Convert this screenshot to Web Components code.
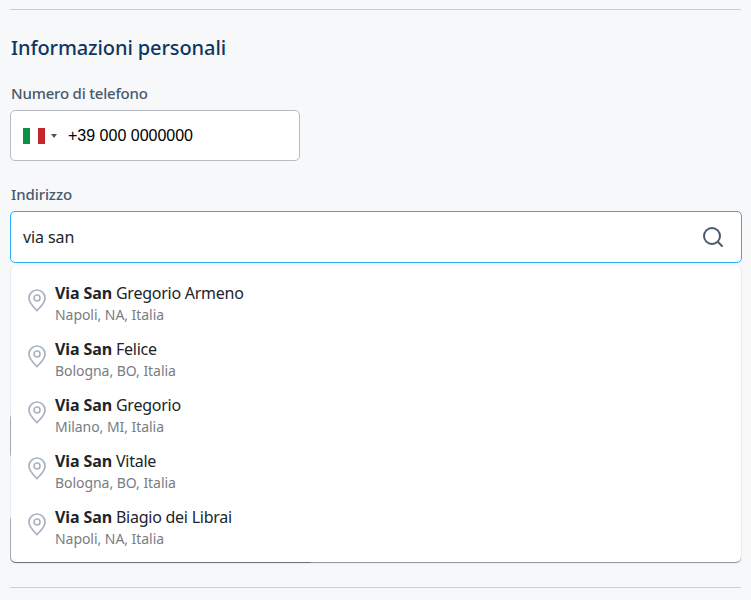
<!DOCTYPE html>
<html lang="it">
<head>
<meta charset="utf-8">
<title>Informazioni personali</title>
<style>
  html, body { margin: 0; height: 100%; background: #f6f8fa; overflow: hidden; }
  body { font-family: "Noto Sans", "Open Sans", sans-serif; }
</style>
</head>
<body>
<profile-form>
  <address-option street="Gregorio Armeno" place="Napoli, NA, Italia"></address-option>
  <address-option street="Felice" place="Bologna, BO, Italia"></address-option>
  <address-option street="Gregorio" place="Milano, MI, Italia"></address-option>
  <address-option street="Vitale" place="Bologna, BO, Italia"></address-option>
  <address-option street="Biagio dei Librai" place="Napoli, NA, Italia"></address-option>
</profile-form>

<script>
  // one row of the suggestion list
  class AddressOption extends HTMLElement {
    constructor() {
      super();
      this.attachShadow({ mode: 'open' });
    }

    connectedCallback() {
      this.shadowRoot.innerHTML = `
        <style>
          :host { display: flex; height: 56px; box-sizing: border-box; padding: 16px 0 0 16px; gap: 8px; }
          svg { width: 20px; height: 26px; margin-top: 5px; flex: none; }
          .street { font-size: 16px; line-height: 22px; color: #212529; letter-spacing: -0.25px; }
          b { font-weight: 700; letter-spacing: -0.1px; }
          .place { margin-top: 1px; font-size: 14px; line-height: 20px; color: #787d82; letter-spacing: -0.05px; }
        </style>
        <svg viewBox="0 0 20 26" fill="none" stroke="#a9b3c0" stroke-width="1.7">
          <path d="M10 23.500c-1-1.400-8-6.500-8-12.500a8 8 0 0 1 16 0c0 6-7 11.100-8 12.500z"/>
          <circle cx="10" cy="11" r="3"/>
        </svg>
        <div>
          <div class="street"><b>Via San</b> ${this.getAttribute('street')}</div>
          <div class="place">${this.getAttribute('place')}</div>
        </div>
      `;
    }
  }

  // the whole section, suggestions are passed in through the slot
  class ProfileForm extends HTMLElement {
    constructor() {
      super();
      this.attachShadow({ mode: 'open' });
    }

    connectedCallback() {
      this.shadowRoot.innerHTML = `
        <style>
          :host { display: block; position: relative; height: 600px; box-sizing: border-box; padding: 9px 10px 0 11px; }
          .rule { height: 1px; background: #c6cfdb; margin-left: -1px; }
          h2 { margin: 24px 0 0; font-size: 20px; line-height: 28px; font-weight: 500; color: #0f3560; letter-spacing: -0.1px; }
          label { display: block; font-size: 15px; line-height: 20px; font-weight: 500; color: #48586d; letter-spacing: -0.2px; }
          .field { box-sizing: border-box; background: #fff; display: flex; align-items: center; margin-left: -1px; }
          .phone-label { margin-top: 21px; }
          .phone { width: 290px; height: 51px; margin-top: 7px; border: 1px solid #b8bcc2; border-radius: 5px; padding-left: 12px; }
          .flag { display: flex; width: 22px; height: 16px; }
          .flag i { flex: 1; }
          .caret { width: 0; height: 0; margin-left: 6px; margin-right: 11px; border: 3px solid transparent; border-top: 4px solid #555; border-bottom: 0; }
          .number { font-family: "Liberation Sans", Arial, sans-serif; font-size: 16px; color: #000; }
          .addr-label { margin-top: 23px; letter-spacing: -0.1px; }
          .address { height: 52px; margin: 7px -1px 0 -1px; border: 1px solid #2aaef5; border-radius: 5px; padding: 0 16px 0 12px; justify-content: space-between; }
          .value { font-size: 16px; color: #212529; letter-spacing: -0.1px; }
          .behind { box-sizing: border-box; margin-left: -1px; background: #fff; border: 1px solid #b0b4ba; border-radius: 5px; }
          .behind-a { width: 304px; height: 46px; margin-top: 150px; }
          .behind-b { width: 304px; height: 48px; margin-top: 56px; }
          .rule-bottom { margin-top: 24px; }
          .menu { position: absolute; left: 11px; top: 266px; width: 730px; height: 296px; background: #fff; border-radius: 5px; box-shadow: 0 1px 1px rgba(0,0,0,.4), 0 0 2px rgba(0,0,0,.05); }
        </style>
        <div class="rule"></div>
        <h2>Informazioni personali</h2>
        <label class="phone-label">Numero di telefono</label>
        <div class="field phone">
          <span class="flag"><i style="background:#0b9246"></i><i style="background:#fff"></i><i style="background:#c1272d"></i></span>
          <span class="caret"></span>
          <span class="number">+39 000 0000000</span>
        </div>
        <label class="addr-label">Indirizzo</label>
        <div class="field address">
          <span class="value">via san</span>
          <svg width="24" height="24" viewBox="0 0 24 24" fill="none" stroke="#4a5a6c" stroke-width="2" stroke-linecap="round">
            <circle cx="11" cy="11" r="8"/>
            <path d="M17 17l4 4"/>
          </svg>
        </div>
        <div class="behind behind-a"></div>
        <div class="behind behind-b"></div>
        <div class="rule rule-bottom"></div>
        <div class="menu"><slot></slot></div>
      `;
    }
  }

  customElements.define('address-option', AddressOption);
  customElements.define('profile-form', ProfileForm);
</script>
</body>
</html>
